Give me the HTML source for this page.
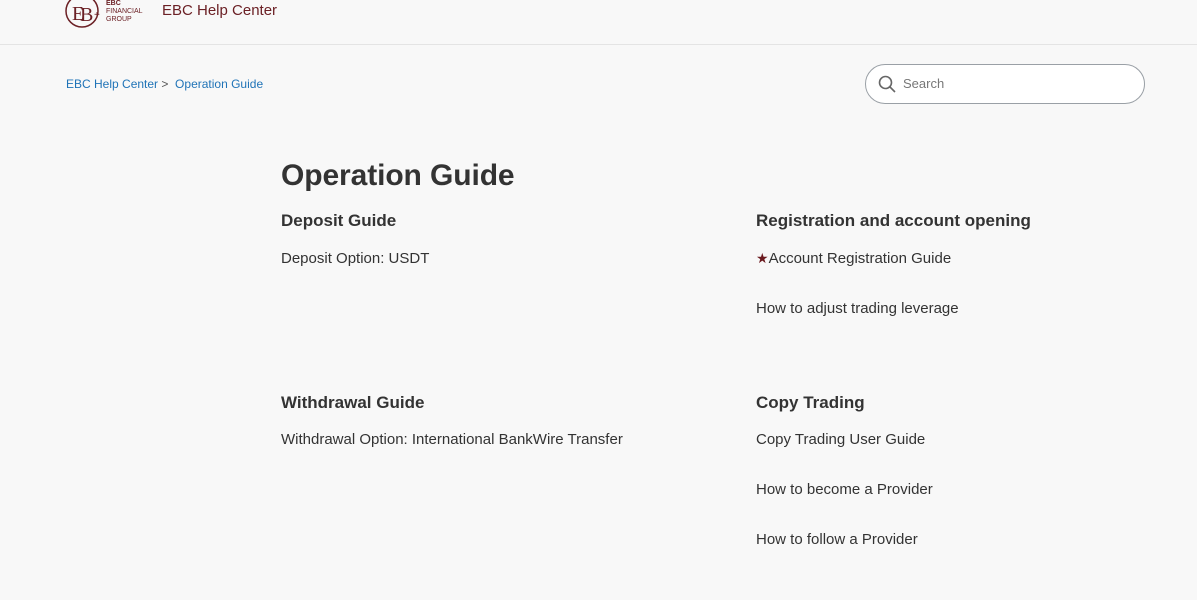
<!DOCTYPE html>
<html><head><meta charset="utf-8"><style>
body{margin:0;background:#f8f8f8;font-family:"Liberation Sans",Arial,sans-serif;color:#2f3941;width:1197px;height:600px;overflow:hidden;position:relative}
.hdr{position:absolute;left:0;top:0;width:1197px;height:44px;border-bottom:1px solid #e4e4e4}
.abs{position:absolute;white-space:nowrap}
.sec{font-size:17px;font-weight:bold;color:#333}
.lnk{font-size:15px;color:#333}
</style></head><body>
<div class="hdr">
<svg class="abs" style="left:65px;top:-6px" width="36" height="36" viewBox="0 0 36 36"><circle cx="17" cy="17" r="16" fill="none" stroke="#6b2025" stroke-width="1.5"/><text x="7" y="26" font-size="20" font-family="Liberation Serif" fill="#6b2025">E</text><text x="15" y="27" font-size="20" font-family="Liberation Serif" fill="#6b2025">B</text></svg>
<div class="abs" style="left:94px;top:10px;font-size:10px;color:#6b2025">+</div>
<div class="abs" style="left:106px;top:0px;font-size:7px;line-height:8px;color:#6b2025"><b>EBC</b><br>FINANCIAL<br>GROUP</div>
<div class="abs" style="left:162px;top:2px;font-size:15px;color:#6b2025">EBC Help Center</div>
</div>
<div class="abs" style="left:66px;top:77px;font-size:12px;color:#1f73b7">EBC Help Center <span style="color:#555">&gt;</span>&nbsp; Operation Guide</div>
<div class="abs" style="left:865px;top:64px;width:278px;height:38px;border:1px solid #9aa0a6;border-radius:20px;background:#fff"></div>
<svg class="abs" style="left:878px;top:75px" width="18" height="18" viewBox="0 0 18 18"><circle cx="7.5" cy="7.5" r="6" fill="none" stroke="#666" stroke-width="1.6"/><path d="M12 12l5 5" stroke="#666" stroke-width="1.6"/></svg>
<div class="abs" style="left:903px;top:76px;font-size:13px;color:#777">Search</div>
<div class="abs" style="left:281px;top:159px;font-size:30px;font-weight:bold;color:#333;letter-spacing:-0.1px">Operation Guide</div>
<div class="abs sec" style="left:281px;top:211px">Deposit Guide</div>
<div class="abs lnk" style="left:281px;top:250px">Deposit Option: USDT</div>
<div class="abs sec" style="left:756px;top:211px">Registration and account opening</div>
<div class="abs lnk" style="left:756px;top:250px"><span style="color:#6b1a1f;font-size:14px">★</span>Account Registration Guide</div>
<div class="abs lnk" style="left:756px;top:300px">How to adjust trading leverage</div>
<div class="abs sec" style="left:281px;top:393px">Withdrawal Guide</div>
<div class="abs lnk" style="left:281px;top:431px">Withdrawal Option: International BankWire Transfer</div>
<div class="abs sec" style="left:756px;top:393px">Copy Trading</div>
<div class="abs lnk" style="left:756px;top:431px">Copy Trading User Guide</div>
<div class="abs lnk" style="left:756px;top:481px">How to become a Provider</div>
<div class="abs lnk" style="left:756px;top:531px">How to follow a Provider</div>
</body></html>
